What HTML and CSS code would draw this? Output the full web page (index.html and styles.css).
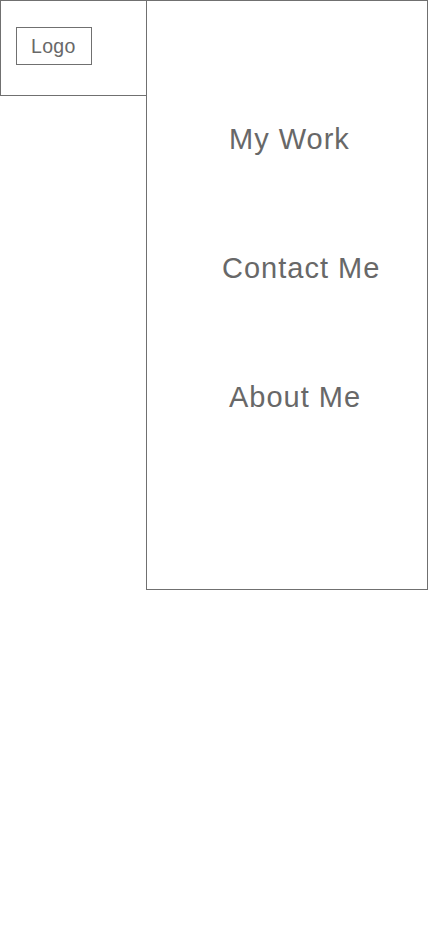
FILE: index.html
```html
<!DOCTYPE html>
<html>
<head>
<meta charset="utf-8">
<link rel="stylesheet" href="styles.css">
</head>
<body>
<div class="page">
  <header class="header">
    <div class="logo">Logo</div>
  </header>
  <nav class="menu">
    <a class="item item-work">My Work</a>
    <a class="item item-contact">Contact Me</a>
    <a class="item item-about">About Me</a>
  </nav>
</div>
</body>
</html>
```
FILE: styles.css
```css
html, body {
  margin: 0;
  padding: 0;
  background: #fff;
}
.page {
  display: flex;
  align-items: flex-start;
  font-family: "Liberation Sans", Arial, sans-serif;
  color: #686868;
}
.header {
  box-sizing: border-box;
  width: 146px;
  height: 96px;
  border: 1px solid #707070;
  border-right: none;
  padding: 26px 0 0 15px;
}
.logo {
  box-sizing: border-box;
  width: 76px;
  height: 38px;
  border: 1px solid #707070;
  font-size: 19.5px;
  line-height: 36px;
  padding-left: 14px;
  letter-spacing: 0.3px;
}
.menu {
  box-sizing: border-box;
  width: 282px;
  height: 590px;
  border: 1px solid #707070;
  display: flex;
  flex-direction: column;
  padding-top: 122px;
}
.item {
  font-size: 29px;
  line-height: 32px;
  height: 32px;
  display: block;
  letter-spacing: 1px;
}
.item-work { margin-left: 82px; }
.item-contact { margin-left: 75px; margin-top: 97px; }
.item-about { margin-left: 82px; margin-top: 97px; }
```
